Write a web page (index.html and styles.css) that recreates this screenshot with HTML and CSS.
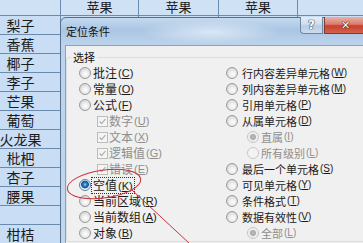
FILE: index.html
```html
<!DOCTYPE html>
<html lang="zh">
<head>
<meta charset="utf-8">
<title>定位条件</title>
<link rel="stylesheet" href="styles.css">
</head>
<body>
<div class="sheet">
  <div class="c head"></div><div class="c head">苹果</div><div class="c head">苹果</div><div class="c head">苹果</div><div class="c head"></div>
  <div class="c">梨子</div><div class="c"></div><div class="c"></div><div class="c"></div><div class="c"></div>
  <div class="c">香蕉</div><div class="c"></div><div class="c"></div><div class="c"></div><div class="c"></div>
  <div class="c">椰子</div><div class="c"></div><div class="c"></div><div class="c"></div><div class="c"></div>
  <div class="c">李子</div><div class="c"></div><div class="c"></div><div class="c"></div><div class="c"></div>
  <div class="c">芒果</div><div class="c"></div><div class="c"></div><div class="c"></div><div class="c"></div>
  <div class="c">葡萄</div><div class="c"></div><div class="c"></div><div class="c"></div><div class="c"></div>
  <div class="c">火龙果</div><div class="c"></div><div class="c"></div><div class="c"></div><div class="c"></div>
  <div class="c">枇杷</div><div class="c"></div><div class="c"></div><div class="c"></div><div class="c"></div>
  <div class="c">杏子</div><div class="c"></div><div class="c"></div><div class="c"></div><div class="c"></div>
  <div class="c">腰果</div><div class="c"></div><div class="c"></div><div class="c"></div><div class="c"></div>
  <div class="c"></div><div class="c"></div><div class="c"></div><div class="c"></div><div class="c"></div>
  <div class="c">柑桔</div><div class="c"></div><div class="c"></div><div class="c"></div><div class="c"></div>
</div>

<div class="dialog">
  <div class="titlebar">
    <div class="title">定位条件</div>
    <div class="btn help">?</div>
    <div class="gapx"></div>
    <div class="btn close">✕</div>
  </div>
  <div class="body">
    <fieldset class="group">
      <legend>选择</legend>
      <div class="cols">
        <div class="it"><span class="rd"></span>批注<span class="mn">(<u>C</u>)</span></div>
        <div class="it"><span class="rd"></span>常量<span class="mn">(<u>O</u>)</span></div>
        <div class="it"><span class="rd"></span>公式<span class="mn">(<u>F</u>)</span></div>
        <div class="it sub dis"><span class="cb"><svg viewBox="0 0 11 11" width="9" height="9"><path d="M2 5.5 L4.5 8 L9 2.5" fill="none" stroke="#b0b0b0" stroke-width="1.6"/></svg></span>数字<span class="mn">(<u>U</u>)</span></div>
        <div class="it sub dis"><span class="cb"><svg viewBox="0 0 11 11" width="9" height="9"><path d="M2 5.5 L4.5 8 L9 2.5" fill="none" stroke="#b0b0b0" stroke-width="1.6"/></svg></span>文本<span class="mn">(<u>X</u>)</span></div>
        <div class="it sub dis"><span class="cb"><svg viewBox="0 0 11 11" width="9" height="9"><path d="M2 5.5 L4.5 8 L9 2.5" fill="none" stroke="#b0b0b0" stroke-width="1.6"/></svg></span>逻辑值<span class="mn">(<u>G</u>)</span></div>
        <div class="it sub dis"><span class="cb"><svg viewBox="0 0 11 11" width="9" height="9"><path d="M2 5.5 L4.5 8 L9 2.5" fill="none" stroke="#b0b0b0" stroke-width="1.6"/></svg></span>错误<span class="mn">(<u>E</u>)</span></div>
        <div class="it"><span class="rd on"></span><span class="focus">空值<span class="mn">(<u>K</u>)</span></span></div>
        <div class="it"><span class="rd"></span>当前区域<span class="mn">(<u>R</u>)</span></div>
        <div class="it"><span class="rd"></span>当前数组<span class="mn">(<u>A</u>)</span></div>
        <div class="it"><span class="rd"></span>对象<span class="mn">(<u>B</u>)</span></div>

        <div class="it r"><span class="rd"></span>行内容差异单元格<span class="mn">(<u>W</u>)</span></div>
        <div class="it r"><span class="rd"></span>列内容差异单元格<span class="mn">(<u>M</u>)</span></div>
        <div class="it r"><span class="rd"></span>引用单元格<span class="mn">(<u>P</u>)</span></div>
        <div class="it r"><span class="rd"></span>从属单元格<span class="mn">(<u>D</u>)</span></div>
        <div class="it r sub2 dis"><span class="rd don"></span>直属<span class="mn">(<u>I</u>)</span></div>
        <div class="it r sub2 dis"><span class="rd doff"></span>所有级别<span class="mn">(<u>L</u>)</span></div>
        <div class="it r"><span class="rd"></span>最后一个单元格<span class="mn">(<u>S</u>)</span></div>
        <div class="it r"><span class="rd"></span>可见单元格<span class="mn">(<u>Y</u>)</span></div>
        <div class="it r"><span class="rd"></span>条件格式<span class="mn">(<u>T</u>)</span></div>
        <div class="it r"><span class="rd"></span>数据有效性<span class="mn">(<u>V</u>)</span></div>
        <div class="it r sub2 dis"><span class="rd don"></span>全部<span class="mn">(<u>L</u>)</span></div>
      </div>
    </fieldset>
  </div>
</div>

<svg class="mark" width="363" height="243" viewBox="0 0 363 243">
  <ellipse cx="104" cy="184" rx="37" ry="14" transform="rotate(-8 104 184)" fill="none" stroke="#c8333d" stroke-width="1"/>
  <line x1="132" y1="190" x2="190" y2="244" stroke="#c8333d" stroke-width="1"/>
</svg>
</body>
</html>
```

FILE: styles.css
```css
* { box-sizing: border-box; margin: 0; padding: 0; }
html, body { width: 363px; height: 243px; overflow: hidden; }
body {
  position: relative;
  background: #c9ddf4;
  font-family: "Noto Sans CJK SC", "Noto Sans", sans-serif;
}

/* spreadsheet */
.sheet {
  margin-left: -19px;
  display: grid;
  grid-template-columns: 80px 78px 80px 79px 80px;
  grid-template-rows: 16px;
  grid-auto-rows: 19px;
}
.c {
  border-right: 1px solid #6a8ab0;
  border-bottom: 1px solid #6a8ab0;
  background: #c9ddf4;
  display: flex;
  align-items: center;
  justify-content: center;
  font-size: 14px;
  line-height: 1;
  color: #1c1c1c;
}
.c.head {
  align-items: flex-end;
  font-family: "Liberation Sans", "Noto Sans CJK SC", sans-serif;
  font-size: 13px;
  line-height: 14px;
  background: #cfe1f5;
}

/* dialog */
.dialog {
  position: absolute;
  left: 60px;
  top: 17px;
  width: 320px;
  height: 240px;
  border: 1px solid #56718f;
  border-radius: 6px 6px 0 0;
  background: linear-gradient(180deg, #c4d9ee 0, #aac6e4 12px, #bdd3eb 27px, #c3d7ec 100%);
  display: flex;
  flex-direction: column;
  padding-left: 4px;
}
.titlebar {
  height: 27px;
  margin-left: -4px;
  display: grid;
  grid-template-columns: 239px 23px 1px 43px;
  align-items: start;
  background: radial-gradient(ellipse 70px 12px at 150px 14px, rgba(235,242,250,0.75), rgba(235,242,250,0) 100%);
}
.title {
  padding-left: 5px;
  font-size: 11px;
  line-height: 26px;
  color: #111;
}
.btn {
  height: 17px;
  display: flex;
  align-items: center;
  justify-content: center;
  font-weight: bold;
  color: #fff;
  margin-top: -1px;
}
.help {
  border: 1px solid #6c86a4;
  border-top: none;
  border-radius: 0 0 0 4px;
  background: linear-gradient(180deg, #e4edf7 0, #cfdeee 45%, #b9cde3 55%, #c9dbee 100%);
  font-family: "DejaVu Sans", sans-serif;
  font-size: 12px;
  text-shadow: 0 0 1px #2b3e57, 0 0 1px #2b3e57, 0 0 1px #2b3e57;
}
.close {
  border: 1px solid #7b3b35;
  border-top: none;
  border-radius: 0 0 4px 0;
  background: linear-gradient(180deg, #eab0a6 0, #dc7d6d 45%, #c7402e 55%, #d4634b 100%);
  font-family: "DejaVu Sans", sans-serif;
  font-size: 11px;
  text-shadow: 0 0 1px #4a1a14, 0 0 1px #4a1a14, 0 0 1px #4a1a14;
}
.body {
  flex: 1;
  background: #f0f0f0;
  border-top: 1px solid #8aa2bc;
  border-left: 1px solid #8aa2bc;
  padding-top: 3px;
}

/* group box */
.group {
  border: 1px solid #d5dfe5;
  border-radius: 3px;
  padding: 0;
  width: 340px;
}
.group legend {
  margin-left: 4px;
  padding: 0 2px;
  font-size: 11px;
  line-height: 16px;
  color: #111;
}
.cols {
  padding-left: 12px;
  display: grid;
  grid-template-columns: 146px auto;
  grid-template-rows: repeat(11, 16px);
  grid-auto-flow: column;
}
.it {
  display: flex;
  align-items: center;
  height: 16px;
  font-size: 12px;
  line-height: 16px;
  color: #1a1a1a;
  white-space: nowrap;
}
.it.r { padding-left: 1px; font-size: 11px; }
.it.r .rd { margin-right: 4px; }
.it.r .mn { font-size: 10px; }
.it.sub { padding-left: 18px; }
.it.sub2 { padding-left: 22px; }
.it.sub2 .rd { margin-right: 2px; }
.dis { color: #8e8e8e; }
.mn {
  font-family: "Liberation Sans", Arial, sans-serif;
  font-size: 11px;
  margin-left: 1px;
}

/* radio / checkbox */
.rd {
  flex: none;
  width: 12px;
  height: 12px;
  margin-right: 2px;
  border-radius: 50%;
  border: 1px solid #9b9b9b;
  background: radial-gradient(circle at 55% 60%, #ffffff 0, #f4f4f4 2px, #d6d6d6 6px);
}
.rd.on {
  border-color: #5b7fa6;
  background: radial-gradient(circle at 50% 45%, #a7d5fa 0, #2f86d4 1.5px, #0f4c8c 3.5px, #dfe6ee 4.2px, #ffffff 6px);
}
.rd.don {
  border-color: #c4c4c4;
  background: radial-gradient(circle at 50% 50%, #bdbdbd 0, #aaaaaa 2.5px, #ececec 3.5px, #f6f6f6 6px);
}
.rd.doff {
  border-color: #c8c8c8;
  background: #f3f3f3;
}
.cb {
  flex: none;
  width: 11px;
  height: 11px;
  margin-right: 1px;
  border: 1px solid #bcbcbc;
  background: #f5f5f5;
  display: flex;
  align-items: center;
  justify-content: center;
}
.cb svg { display: block; }
.focus {
  outline: 1px dotted #333;
  outline-offset: 0;
  line-height: 14px;
  padding: 0 1px;
  margin-left: -1px;
}

/* annotation */
.mark {
  position: absolute;
  left: 0;
  top: 0;
  pointer-events: none;
}
```
